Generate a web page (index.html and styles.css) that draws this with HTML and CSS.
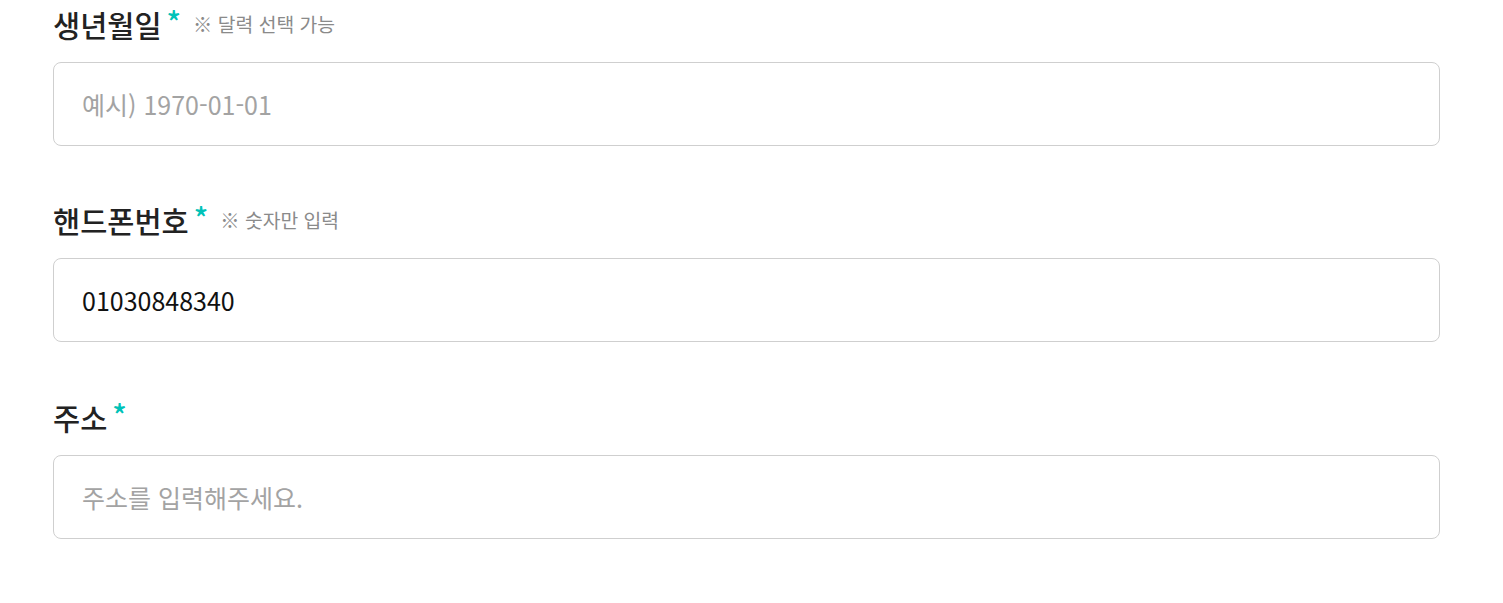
FILE: index.html
```html
<!DOCTYPE html>
<html lang="ko">
<head>
	<meta charset="UTF-8">
	<title>회원정보</title>
	<link rel="stylesheet" href="styles.css">
</head>
<body>
	<form class="form">
		<div class="field">
			<label class="label" for="birth">생년월일<span class="req">*</span><span class="hint">※ 달력 선택 가능</span></label>
			<input class="input" id="birth" type="text" placeholder="예시) 1970-01-01">
		</div>
		<div class="field">
			<label class="label" for="phone">핸드폰번호<span class="req">*</span><span class="hint">※ 숫자만 입력</span></label>
			<input class="input" id="phone" type="text" value="01030848340">
		</div>
		<div class="field">
			<label class="label" for="addr">주소<span class="req">*</span></label>
			<input class="input" id="addr" type="text" placeholder="주소를 입력해주세요.">
		</div>
	</form>
</body>
</html>
```

FILE: styles.css
```css
body {
	margin: 0;
	background: #fff;
	font-family: "Noto Sans CJK KR", "Noto Sans", sans-serif;
}

.form {
	padding: 6px 63px 0 53px;
}

.field {
	margin-bottom: 56.3px;
}

.label {
	display: flex;
	align-items: center;
	height: 36px;
	margin-bottom: 20px;
	font-size: 29.5px;
	font-weight: 500;
	color: #222;
}

.req {
	color: #00c2b8;
	font-size: 30px;
	margin-left: 5px;
	position: relative;
	top: -3px;
}

.hint {
	font-size: 19.3px;
	font-weight: 400;
	color: #8a8a8a;
	margin-left: 12px;
}

.input {
	display: block;
	box-sizing: border-box;
	width: 100%;
	height: 84px;
	padding: 0 28px;
	border: 1px solid #cfcfcf;
	border-radius: 8px;
	font-family: "Noto Sans CJK KR", "Noto Sans", sans-serif;
	font-size: 25px;
	color: #111;
	outline: none;
}

.input::placeholder {
	color: #a3a3a3;
}
```
